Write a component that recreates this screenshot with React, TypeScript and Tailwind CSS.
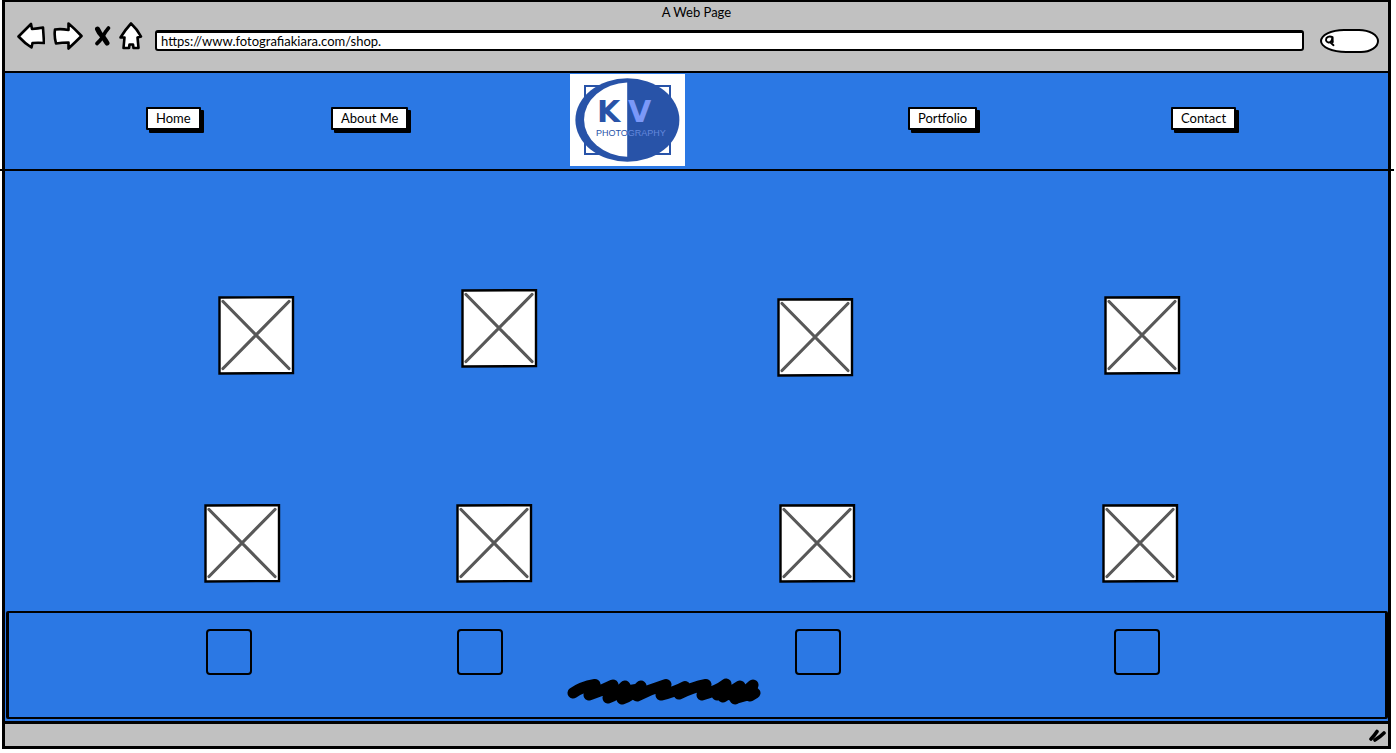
import React from "react";

const arrow = {
  fill: "#fff",
  stroke: "#000",
  strokeWidth: 2.6,
  strokeLinejoin: "round" as const,
  strokeLinecap: "round" as const,
};

function BackIcon() {
  return (
    <svg className="block" width="28" height="28" viewBox="0 0 28 28" aria-hidden="true">
      <path {...arrow} d="M1.500 14.500 L14 2 L15 7 Q21 6.500 26 5.500 L27 21 Q21 20.500 15.500 21 L14.500 25.500 Q8 21.500 1.500 14.500 Z" />
    </svg>
  );
}

function ForwardIcon() {
  return (
    <svg className="block" width="30" height="28" viewBox="0 0 30 28" aria-hidden="true">
      <path {...arrow} d="M2 7.500 Q8 6.500 15.500 8 L15.500 1.500 Q22 7 28.500 14 Q22 20.500 15.500 26.500 L15.500 20.500 Q9 20.500 3 21.500 Q1 14 2 7.500 Z" />
    </svg>
  );
}

function StopIcon() {
  return (
    <svg className="block" width="18" height="22" viewBox="0 0 18 22" aria-hidden="true">
      <g fill="none" stroke="#000" strokeLinecap="round">
        <path strokeWidth="5" d="M4.500 4 Q6 8 10 12 Q12.500 15.500 14 18" />
        <path strokeWidth="3.600" d="M15.500 3 Q12 7 9.500 12 Q7 16 4 18.500" />
      </g>
    </svg>
  );
}

function HomeIcon() {
  return (
    <svg className="block" width="24" height="28" viewBox="0 0 24 28" aria-hidden="true">
      <path {...arrow} d="M12 1.500 Q18 7 22 14.500 L18.500 15.500 L19.500 26 L14.500 26 L14 22.500 L10.500 22.500 L10 26 L4.500 26 L5.500 15.500 L1.500 15.500 Q6 8 12 1.500 Z" />
    </svg>
  );
}

function SearchIcon() {
  return (
    <svg className="block shrink-0" width="12" height="12" viewBox="0 0 12 12" aria-hidden="true">
      <g fill="none" stroke="#000" strokeWidth="1.900" strokeLinecap="round">
        <path d="M8.500 2.200 Q5 0.500 2.500 3 Q1 6.500 4.500 7.500 Q8 7.800 8.500 2.200 Z" />
        <path d="M6.500 7.500 L9.500 10.200 M8.500 3 L8.800 7" />
      </g>
    </svg>
  );
}

function Logo() {
  return (
    <svg className="block" width="115" height="92" viewBox="0 0 115 92" role="img" aria-label="KV Photography">
      <rect width="115" height="92" fill="#fff" />
      <rect x="15" y="12" width="85" height="68" fill="none" stroke="#2853a8" strokeWidth="2" />
      <ellipse cx="57.400" cy="46" rx="52" ry="41.800" fill="#2853a8" />
      <path d="M57.200 8.500 A45.500 37.200 0 0 0 57.200 82.800 Z" fill="#fff" />
      <g fontFamily="'DejaVu Sans', sans-serif" fontSize="30" fontWeight="bold">
        <text x="27" y="48" fill="#2853a8">K</text>
        <text x="58" y="48" fill="#7b98f8">V</text>
      </g>
      <text x="26" y="62" fontFamily="'Liberation Sans', sans-serif" fontSize="9" fill="#2853a8">
        PHOTO<tspan fill="#6488dc">GRAPHY</tspan>
      </text>
    </svg>
  );
}

function Scribble() {
  return (
    <svg className="block" width="196" height="30" viewBox="0 0 196 30" aria-hidden="true">
      <path
        fill="none"
        stroke="#000"
        strokeWidth="11"
        strokeLinecap="round"
        strokeLinejoin="round"
        d="M6 16 Q14 10 28 7.500 Q24 12 22 18 Q34 14 46 8 Q42 15 41 21 Q50 18 58 9 Q56 17 55 22 Q66 18 74 9 Q72 14 70 19 Q84 12 99 7.500 Q96 12 94 18 Q108 15 118 9.500 Q116 13 112 17 Q126 10 139 7.500 Q137 12 135 18 Q150 14 159 7 Q158 14 156 20 Q165 14 173 9 Q171 15 168 22 Q178 16 186 8 Q184 14 183 19 L188 16 L170 21 L160 16 L150 18 M44 18 L60 14 L72 12"
      />
    </svg>
  );
}

function NavButton({ label }: { label: string }) {
  return (
    <button
      type="button"
      className="block h-[23px] rounded-[1px] border-2 border-black bg-white px-2 text-[13px] leading-[18px] whitespace-nowrap shadow-[3px_3px_0_#000]"
    >
      {label}
    </button>
  );
}

function Placeholder() {
  return (
    <svg className="block" width="77" height="79" viewBox="0 0 77 79" role="img" aria-label="Image">
      <path d="M1.500 1.500 L75 1.200 L75 77 L1.500 77.500 Z" fill="#fff" stroke="#000" strokeWidth="2.400" />
      <path d="M5 5.500 L71 72.500 M71 5.500 L5 72.500" stroke="#585858" strokeWidth="3.200" strokeLinecap="round" />
    </svg>
  );
}

function Tile() {
  return <div className="h-[46px] w-[46px] rounded-[4px] border-2 border-black" />;
}

export default function App() {
  return (
    <div className="min-h-screen overflow-x-hidden bg-white font-['Lato',sans-serif] text-[13px] text-black">
      <div className="mr-[5px] ml-[2px] border-x-3 border-t-2 border-b-3 border-black bg-[#2b78e4]">
        <header className="border-b-2 border-black bg-[#c1c1c1] pb-[21px]">
          <h1 className="pt-px text-center text-[13px] leading-[18px] font-normal">A Web Page</h1>
          <div className="flex h-[29px] items-center pr-[9px] pl-3">
            <button type="button" aria-label="Back"><BackIcon /></button>
            <button type="button" aria-label="Forward" className="ml-2"><ForwardIcon /></button>
            <button type="button" aria-label="Stop" className="ml-2.5"><StopIcon /></button>
            <button type="button" aria-label="Home" className="ml-2"><HomeIcon /></button>
            <input
              aria-label="Address"
              defaultValue="https://www.fotografiakiara.com/shop."
              className="mt-2.5 ml-3 h-[21px] min-w-0 flex-1 rounded-[3px] border-x-2 border-t-3 border-b-2 border-black bg-white px-1 pb-px text-[13px] leading-[15px] outline-none"
            />
            <label className="mt-2.5 ml-4 flex h-6 w-[59px] items-center rounded-[24px_20px_18px_26px/12px] border-2 border-black bg-white pl-0.5">
              <SearchIcon />
              <input aria-label="Search" className="w-full min-w-0 bg-transparent px-1 outline-none" />
            </label>
          </div>
        </header>

        <nav className="grid grid-cols-[141fr_185fr_239fr_338fr_263fr_217fr] items-center justify-items-start pt-px pb-[3px]">
          <div className="col-start-2 pb-1"><NavButton label="Home" /></div>
          <div className="pb-1"><NavButton label="About Me" /></div>
          <a href="#"><Logo /></a>
          <div className="pb-1"><NavButton label="Portfolio" /></div>
          <div className="pb-1"><NavButton label="Contact" /></div>
        </nav>
        <hr className="mx-[-6px] border-t-2 border-black" />

        <main className="pt-[118px] pb-7">
          <div className="grid grid-cols-[213fr_243fr_316fr_327fr_284fr] items-start">
            <div className="col-start-2 pt-[7px]"><Placeholder /></div>
            <div><Placeholder /></div>
            <div className="pt-[9px]"><Placeholder /></div>
            <div className="pt-[7px]"><Placeholder /></div>
          </div>
          <div className="mt-[127px] grid grid-cols-[199fr_252fr_323fr_323fr_286fr] items-start">
            <div className="col-start-2"><Placeholder /></div>
            <Placeholder />
            <Placeholder />
            <Placeholder />
          </div>
        </main>

        <footer className="mb-0.5 ml-px rounded-[2px] border-x-3 border-y-2 border-black pt-4 pb-2.5">
          <div className="grid grid-cols-[197fr_251fr_338fr_319fr_271fr]">
            <div className="col-start-2"><Tile /></div>
            <Tile />
            <Tile />
            <Tile />
          </div>
          <div className="grid grid-cols-[558fr_818fr] pt-0.5">
            <div className="col-start-2"><Scribble /></div>
          </div>
        </footer>

        <div className="flex h-[25px] items-center justify-end border-t-3 border-black bg-[#c1c1c1] pr-0.5">
          <svg className="block" width="18" height="16" viewBox="0 0 18 16" aria-hidden="true">
            <path d="M3 12 Q6 9 9 4.500 M7 13 Q12 10 16 6" fill="none" stroke="#000" strokeWidth="3.600" strokeLinecap="round" />
          </svg>
        </div>
      </div>
    </div>
  );
}
